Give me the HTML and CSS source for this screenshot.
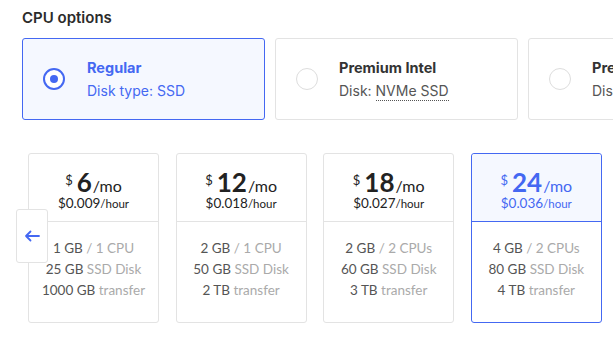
FILE: index.html
```html
<!DOCTYPE html>
<html lang="en">
<head>
  <meta charset="UTF-8" />
  <title>CPU options</title>
  <link rel="stylesheet" href="styles.css">
</head>
<body>
  <h2 class="section-title">CPU options</h2>

  <div class="cpu-options">
    <div class="cpu-card selected">
      <span class="radio"></span>
      <div class="cpu-text">
        <div class="cpu-name">Regular</div>
        <div class="cpu-disk">Disk type: SSD</div>
      </div>
    </div>
    <div class="cpu-card">
      <span class="radio"></span>
      <div class="cpu-text">
        <div class="cpu-name">Premium Intel</div>
        <div class="cpu-disk">Disk: <span class="dotted">NVMe SSD</span></div>
      </div>
    </div>
    <div class="cpu-card">
      <span class="radio"></span>
      <div class="cpu-text">
        <div class="cpu-name">Premium AMD</div>
        <div class="cpu-disk">Disk: <span class="dotted">NVMe SSD</span></div>
      </div>
    </div>
  </div>

  <div class="plans">
    <button class="arrow-btn" aria-label="Previous">
      <svg width="16" height="12" viewBox="0 0 16 12"><path d="M15 6H2M6.5 1.5L2 6l4.5 4.5" fill="none" stroke="#4468f2" stroke-width="1.8" stroke-linecap="round" stroke-linejoin="round"/></svg>
    </button>

    <div class="plan">
      <div class="plan-head">
        <div class="price"><span class="cur">$</span><span class="amount">6</span><span class="per">/mo</span></div>
        <div class="hourly">$0.009<span>/hour</span></div>
      </div>
      <ul class="specs">
        <li>1 GB <span>/ 1 CPU</span></li>
        <li>25 GB <span>SSD Disk</span></li>
        <li>1000 GB <span>transfer</span></li>
      </ul>
    </div>

    <div class="plan">
      <div class="plan-head">
        <div class="price"><span class="cur">$</span><span class="amount">12</span><span class="per">/mo</span></div>
        <div class="hourly">$0.018<span>/hour</span></div>
      </div>
      <ul class="specs">
        <li>2 GB <span>/ 1 CPU</span></li>
        <li>50 GB <span>SSD Disk</span></li>
        <li>2 TB <span>transfer</span></li>
      </ul>
    </div>

    <div class="plan">
      <div class="plan-head">
        <div class="price"><span class="cur">$</span><span class="amount">18</span><span class="per">/mo</span></div>
        <div class="hourly">$0.027<span>/hour</span></div>
      </div>
      <ul class="specs">
        <li>2 GB <span>/ 2 CPUs</span></li>
        <li>60 GB <span>SSD Disk</span></li>
        <li>3 TB <span>transfer</span></li>
      </ul>
    </div>

    <div class="plan selected">
      <div class="plan-head">
        <div class="price"><span class="cur">$</span><span class="amount">24</span><span class="per">/mo</span></div>
        <div class="hourly">$0.036<span>/hour</span></div>
      </div>
      <ul class="specs">
        <li>4 GB <span>/ 2 CPUs</span></li>
        <li>80 GB <span>SSD Disk</span></li>
        <li>4 TB <span>transfer</span></li>
      </ul>
    </div>
  </div>
</body>
</html>
```

FILE: styles.css
```css
body {
  margin: 0;
  font-family: Inter, "Liberation Sans", sans-serif;
  background-color: #fff;
  color: #333;
  overflow: hidden;
  width: 613px;
  height: 338px;
}
.section-title {
  margin: 0;
  padding: 8px 0 0 22px;
  font-size: 15px;
  line-height: 20px;
  font-weight: 600;
  color: #2b2b2b;
}
.cpu-options {
  display: flex;
  gap: 10px;
  padding-left: 22px;
  margin-top: 10px;
}
.cpu-card {
  flex: 0 0 243px;
  box-sizing: border-box;
  height: 82px;
  border: 1px solid #e3e3e3;
  border-radius: 3px;
  display: flex;
  align-items: center;
  padding-left: 20px;
  gap: 21px;
  background: #fff;
}
.cpu-card.selected {
  border-color: #4468f2;
  background-color: #f5f8ff;
  gap: 22px;
}
.radio {
  width: 22px;
  height: 22px;
  box-sizing: border-box;
  border: 1px solid #ddd;
  border-radius: 50%;
  flex-shrink: 0;
  display: flex;
  align-items: center;
  justify-content: center;
  background: #fff;
}
.selected .radio {
  border: 2px solid #4468f2;
}
.selected .radio::after {
  content: "";
  width: 8px;
  height: 8px;
  border-radius: 50%;
  background-color: #4468f2;
}
.cpu-name {
  font-size: 14.5px;
  font-weight: 700;
  line-height: 20px;
  color: #333;
}
.cpu-disk {
  font-size: 14px;
  line-height: 20px;
  margin-top: 3px;
  color: #555;
}
.selected .cpu-name,
.selected .cpu-disk {
  color: #4468f2;
}
.dotted {
  border-bottom: 1px dotted #555;
  padding-bottom: 1px;
}
.plans {
  position: relative;
  display: flex;
  gap: 16.6px;
  padding-left: 28px;
  margin-top: 33px;
  font-family: Lato, "Liberation Sans", sans-serif;
}
.arrow-btn {
  position: absolute;
  left: 16px;
  top: 56px;
  width: 32px;
  height: 54px;
  padding: 0;
  border: 1px solid #e3e3e3;
  border-radius: 3px;
  background: #fff;
  display: flex;
  align-items: center;
  justify-content: center;
  z-index: 1;
}
.plan {
  flex: 0 0 131px;
  box-sizing: border-box;
  height: 170px;
  border: 1px solid #e3e3e3;
  border-radius: 3px;
  text-align: center;
  background: #fff;
}
.plan-head {
  height: 68px;
  box-sizing: border-box;
  border-bottom: 1px solid #e3e3e3;
  padding-top: 15px;
  border-radius: 3px 3px 0 0;
}
.price {
  display: flex;
  justify-content: center;
  align-items: baseline;
  height: 26px;
  line-height: 26px;
  color: #222;
}
.cur {
  align-self: flex-start;
  font-size: 13px;
  line-height: 16px;
  margin-top: 3px;
  margin-right: 4px;
}
.amount {
  font-size: 26px;
  font-weight: 700;
}
.per {
  font-size: 16px;
  margin-left: 1px;
}
.hourly {
  font-size: 13.5px;
  line-height: 16px;
  color: #222;
}
.hourly span {
  font-size: 11.5px;
}
.specs {
  list-style: none;
  margin: 0;
  padding: 16px 0 0;
  font-size: 13.5px;
  line-height: 21px;
  color: #555;
}
.specs span {
  color: #aaa;
}
.plan.selected {
  border-color: #4468f2;
}
.plan.selected .plan-head {
  background-color: #f5f8ff;
  border-bottom-color: #4468f2;
}
.plan.selected .price,
.plan.selected .hourly {
  color: #4468f2;
}
```
